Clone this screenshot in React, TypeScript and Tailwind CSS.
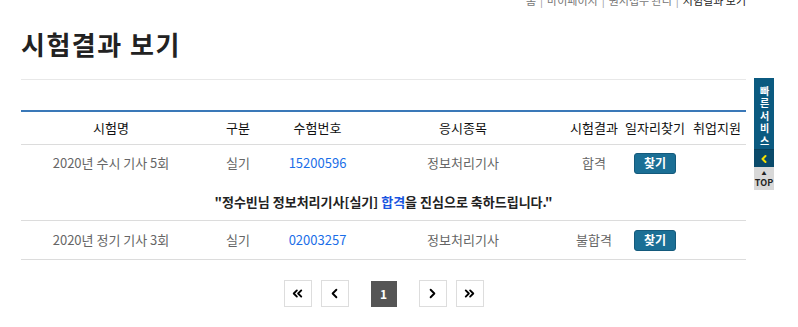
import { ChevronLeft, ChevronRight, ChevronsLeft, ChevronsRight } from 'lucide-react'

const cols = 'grid grid-cols-[180px_74px_85px_206px_56px_66px_58px] items-center text-center'

const rows = [
  { name: '2020년 수시 기사 5회', type: '실기', no: '15200596', subject: '정보처리기사', result: '합격', passed: true },
  { name: '2020년 정기 기사 3회', type: '실기', no: '02003257', subject: '정보처리기사', result: '불합격', passed: false },
]

function FindButton() {
  return (
    <button className="mx-auto flex h-[21px] w-[42px] items-center justify-center rounded-[3px] border border-[#145a7c] bg-[#1b6f95] text-[12px] font-bold leading-none text-white">
      찾기
    </button>
  )
}

function PageBox({ children }: { children: React.ReactNode }) {
  return (
    <div className="flex h-[27px] w-[28px] items-center justify-center border border-[#dddddd] bg-white text-black">
      {children}
    </div>
  )
}

export default function App() {
  return (
    <div
      className="relative h-[327px] w-[798px] overflow-hidden bg-white text-[#222]"
      style={{ fontFamily: '"Noto Sans CJK KR", "Noto Sans", sans-serif' }}
    >
      <div className="ml-[21px] w-[725px]">
        {/* breadcrumb, cut off at top */}
        <div className="-mt-[6px] flex h-[12px] justify-end gap-[4px] text-[11px] leading-[12px] text-[#777]">
          <span>홈</span>
          <span className="text-[#999]">|</span>
          <span>마이페이지</span>
          <span className="text-[#999]">|</span>
          <span>원서접수 관리</span>
          <span className="text-[#999]">|</span>
          <span className="text-[#222]">시험결과 보기</span>
        </div>

        <h1 className="mt-[23px] h-[30px] text-[26px] font-bold leading-[30px] tracking-[1.5px] text-[#222]">
          시험결과 보기
        </h1>

        <div className="mt-[20px] border-t border-[#e8e8e8]" />

        {/* result table */}
        <div className="mt-[30px] border-t-2 border-[#3a78b8]">
          <div className={`${cols} h-[33px] border-b border-[#dcdcdc] text-[13px] text-[#111]`}>
            <div>시험명</div>
            <div>구분</div>
            <div>수험번호</div>
            <div>응시종목</div>
            <div>시험결과</div>
            <div className="whitespace-nowrap">일자리찾기</div>
            <div>취업지원</div>
          </div>

          {rows.map((r) => (
            <div key={r.no} className="border-b border-[#dcdcdc]">
              <div className={`${cols} ${r.passed ? 'h-[36px]' : 'h-[38px]'} text-[13px] text-[#666]`}>
                <div>{r.name}</div>
                <div>{r.type}</div>
                <div className="text-[#1a6ee8]">{r.no}</div>
                <div>{r.subject}</div>
                <div>{r.result}</div>
                <div>
                  <FindButton />
                </div>
                <div />
              </div>
              {r.passed && (
                <div className="flex h-[39px] items-center justify-center whitespace-pre pt-[2px] text-[13px] font-bold text-[#222]">
                  "정수빈님 정보처리기사[실기] <span className="text-[#1a55e0]">합격</span>을 진심으로 축하드립니다."
                </div>
              )}
            </div>
          ))}
        </div>

        {/* pagination */}
        <div className="mt-[20px] flex items-center justify-center">
          <PageBox>
            <ChevronsLeft className="h-[15px] w-[15px]" strokeWidth={3} />
          </PageBox>
          <div className="ml-[9px]">
            <PageBox>
              <ChevronLeft className="h-[15px] w-[15px]" strokeWidth={3} />
            </PageBox>
          </div>
          <div className="mx-[22px] flex h-[26px] w-[26px] items-center justify-center bg-[#555555] text-[12px] font-bold text-white">
            1
          </div>
          <PageBox>
            <ChevronRight className="h-[15px] w-[15px]" strokeWidth={3} />
          </PageBox>
          <div className="ml-[9px]">
            <PageBox>
              <ChevronsRight className="h-[15px] w-[15px]" strokeWidth={3} />
            </PageBox>
          </div>
        </div>
      </div>

      {/* quick service side bar */}
      <div className="absolute left-[754px] top-[78px] w-[20px]">
        <div className="flex h-[72px] justify-center border-b border-[#08405c] bg-[#0b5a80] pt-[8px]">
          <span className="text-[10px] font-bold leading-[20px] tracking-[2.5px] text-white [text-orientation:upright] [writing-mode:vertical-rl]">
            빠른서비스
          </span>
        </div>
        <div className="flex h-[17px] items-center justify-center bg-[#0a4a6a]">
          <ChevronLeft className="h-[12px] w-[12px] text-[#f5e000]" strokeWidth={4} />
        </div>
        <div className="flex h-[23px] flex-col items-center justify-center bg-[#d8d8d8] text-[#222]">
          <span className="text-[5px] leading-[7px]">▲</span>
          <span className="text-[9px] font-bold leading-[13px]">TOP</span>
        </div>
      </div>
    </div>
  )
}
